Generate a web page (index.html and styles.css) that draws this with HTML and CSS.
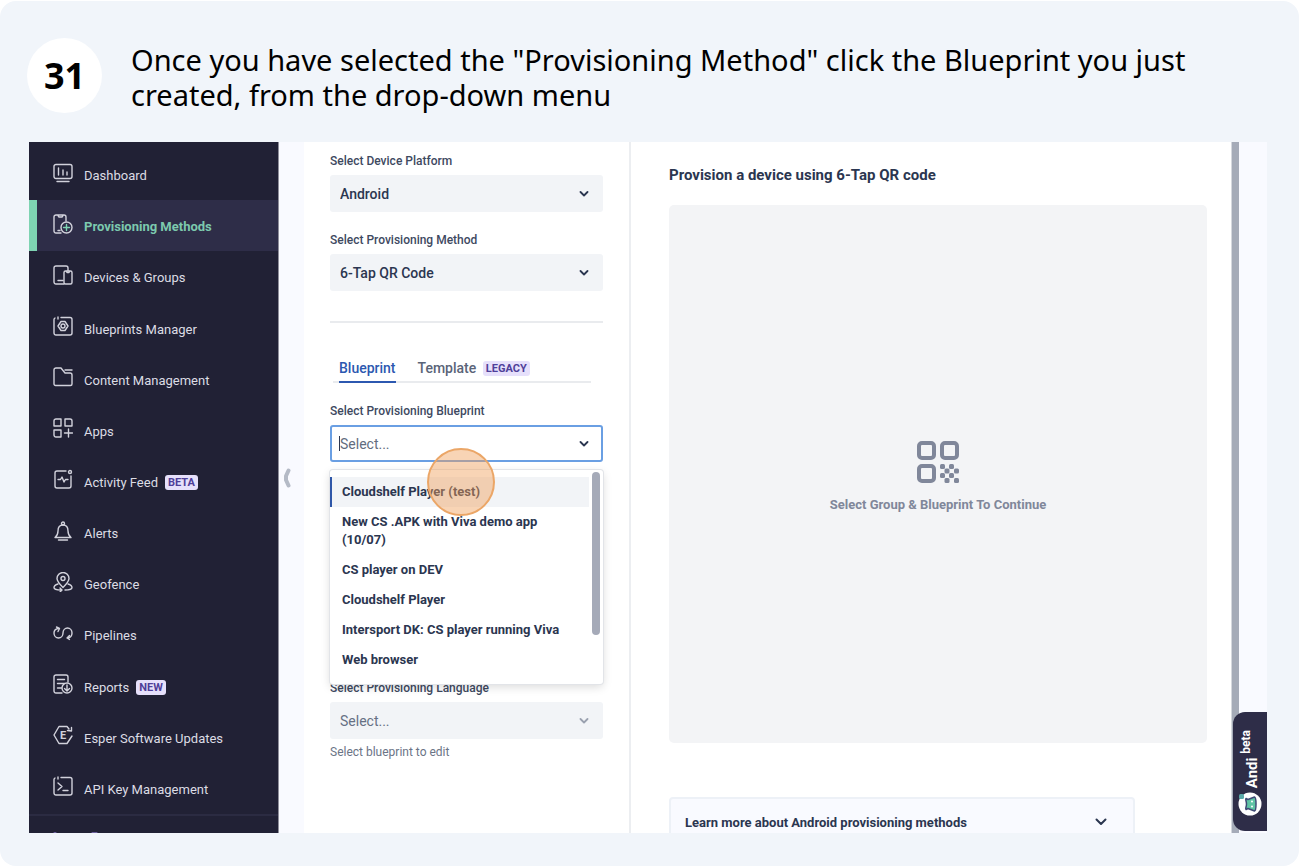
FILE: index.html
```html
<!DOCTYPE html>
<html lang="en">
<head>
  <meta charset="UTF-8">
  <meta name="viewport" content="width=device-width, initial-scale=1.0">
  <title>Step 31 - Select the Blueprint</title>
  <link rel="stylesheet" href="styles.css">
</head>
<body>

  <article class="step">
    <header class="step-header">
      <span class="step-number">31</span>
      <h1 class="step-title">Once you have selected the "Provisioning Method" click the Blueprint you just created, from the drop-down menu</h1>
    </header>

    <div class="app">

      <!-- Sidebar -->
      <aside class="sidebar">
        <nav class="nav">
          <a href="#" class="nav-item">
            <svg class="icon" viewBox="0 0 20 20"><rect x="1" y="1.500" width="18" height="14" rx="2"/><path d="M5.500 5v7M10 7v5M14 9v3M4 18.500h12"/></svg>
            Dashboard
          </a>
          <a href="#" class="nav-item active">
            <svg class="icon" viewBox="0 0 20 20"><path d="M8 19H3a2 2 0 0 1-2-2V3a2 2 0 0 1 2-2h8a2 2 0 0 1 2 2v4M5 1.500l1 1.500h3l1-1.500M5 16.500h2"/><circle cx="13.500" cy="13.500" r="5.500"/><path class="green" d="M13.500 10.500v6M10.500 13.500h6"/></svg>
            Provisioning Methods
          </a>
          <a href="#" class="nav-item">
            <svg class="icon" viewBox="0 0 20 20"><path d="M11 19H3a2 2 0 0 1-2-2V3a2 2 0 0 1 2-2h10a2 2 0 0 1 2 2v3M5 15.500h5"/><rect x="11" y="6" width="8" height="13" rx="1.500"/><path d="M13.500 6.500l.5 1h2l.5-1"/></svg>
            Devices &amp; Groups
          </a>
          <a href="#" class="nav-item">
            <svg class="icon" viewBox="0 0 20 20"><path d="M8 1.500h9a2 2 0 0 1 2 2V17a2 2 0 0 1-2 2H3a2 2 0 0 1-2-2V3.500a2 2 0 0 1 1-1.500M5 1v2"/><path d="M8 5.500h4l1 1.500 2 3-2 3-1 1.500H8L7 13l-2-3 2-3z"/><circle cx="10" cy="10" r="2"/></svg>
            Blueprints Manager
          </a>
          <a href="#" class="nav-item">
            <svg class="icon" viewBox="0 0 20 20"><path d="M12 3h7M1 3a2 2 0 0 1 2-2h5l4 5h5a2 2 0 0 1 2 2v9a1.500 1.500 0 0 1-1.500 1.500h-15A1.500 1.500 0 0 1 1 17z"/></svg>
            Content Management
          </a>
          <a href="#" class="nav-item">
            <svg class="icon" viewBox="0 0 20 20"><path d="M3 1h5v7H1V3a2 2 0 0 1 2-2zM12 1h5a2 2 0 0 1 2 2v5h-7zM1 12h7v7H3a2 2 0 0 1-2-2zM15.500 11v8M11.500 15h8"/></svg>
            Apps
          </a>
          <a href="#" class="nav-item">
            <svg class="icon" viewBox="0 0 20 20"><path d="M13 2H4a2 2 0 0 0-2 2v13a2 2 0 0 0 2 2h12a2 2 0 0 0 2-2V7M5 10.500h2.500L9 8l2 5 1.500-2.500H15"/><circle cx="17" cy="3" r="1.500"/></svg>
            Activity Feed <span class="badge">BETA</span>
          </a>
          <a href="#" class="nav-item">
            <svg class="icon" viewBox="0 0 20 20"><path d="M2 16.500c2-1.500 3-3 3-6.500 0-4 2-6 5-6s5 2 5 6c0 3.500 1 5 3 6.500zM5.500 19h9"/><circle cx="10" cy="2.500" r="1.500"/></svg>
            Alerts
          </a>
          <a href="#" class="nav-item">
            <svg class="icon" viewBox="0 0 20 20"><path d="M10 15.500C6 11.500 4 9 4 6.500a6 6 0 0 1 12 0c0 2.500-2 5-6 9z"/><circle cx="10" cy="6.500" r="2"/><path d="M5 12c-3 1-4 2-4 3.500 0 1.500 3 2.500 7 2.500M7 16l2 2-2 2M15 12c3 1 4 2 4 3.500 0 1.500-3 2.500-7 2.500"/></svg>
            Geofence
          </a>
          <a href="#" class="nav-item">
            <svg class="icon" viewBox="0 0 20 20"><path d="M5 5.500C2.500 6 1 8 1 10c0 3 2 5 4.500 5S10 13 10 10s2-5 4.500-5S19 7 19 10c0 2.500-1.500 4.500-4 5M3.500 4l3 1.500L5 8.500M16.500 12.500l-2.500 2.500 2.500 1.500"/></svg>
            Pipelines
          </a>
          <a href="#" class="nav-item">
            <svg class="icon" viewBox="0 0 20 20"><path d="M9 19H3a2 2 0 0 1-2-2V3a2 2 0 0 1 2-2h10a2 2 0 0 1 2 2v5M4.500 5.500h7M4.500 9.500h7M4.500 14h4"/><circle cx="14" cy="14" r="5"/><path d="M14 11v5.500M11.500 14.500l2.500 2.500 2.500-2.500"/></svg>
            Reports <span class="badge">NEW</span>
          </a>
          <a href="#" class="nav-item">
            <svg class="icon" viewBox="0 0 20 20"><path d="M16 4l-2-2.500H6L1 10l5 8.500h8l5-7.500M14.500 5.500l4 .5V2.500"/><text class="icon-letter" x="10" y="14">E</text></svg>
            Esper Software Updates
          </a>
          <a href="#" class="nav-item">
            <svg class="icon" viewBox="0 0 20 20"><path d="M8 1.500h9a2 2 0 0 1 2 2V17a2 2 0 0 1-2 2H3a2 2 0 0 1-2-2V3.500a2 2 0 0 1 1-1.500M5 1v2M5 7l4 3.500L5 14M10 14.500h5"/></svg>
            API Key Management
          </a>
        </nav>
        <div class="nav-more">
          <svg width="48" height="2" viewBox="0 0 48 2"><path d="M1 1.500h2M39 1.500h5"/></svg>
        </div>
      </aside>

      <div class="gutter">
        <button type="button" class="collapse" aria-label="Collapse sidebar">
          <svg width="8" height="20" viewBox="0 0 8 20"><path d="M5.500 2.500L3 8v4l2.500 5.500"/></svg>
        </button>
      </div>

      <!-- Provisioning form -->
      <form class="settings">
        <label class="label" for="platform">Select Device Platform</label>
        <div class="field">
          <select id="platform"><option>Android</option></select>
          <svg class="chevron" viewBox="0 0 10 6"><path d="M1.500 1L5 4.500 8.500 1"/></svg>
        </div>

        <label class="label" for="method">Select Provisioning Method</label>
        <div class="field">
          <select id="method"><option>6-Tap QR Code</option></select>
          <svg class="chevron" viewBox="0 0 10 6"><path d="M1.500 1L5 4.500 8.500 1"/></svg>
        </div>

        <hr class="divider">

        <div class="tabs">
          <button type="button" class="tab selected">Blueprint</button>
          <button type="button" class="tab">Template <span class="badge legacy">LEGACY</span></button>
        </div>

        <label class="label" for="blueprint">Select Provisioning Blueprint</label>
        <div class="field open">
          <input type="text" id="blueprint" placeholder="Select..." autocomplete="off">
          <span class="caret"></span>
          <svg class="chevron" viewBox="0 0 10 6"><path d="M1.500 1L5 4.500 8.500 1"/></svg>
          <div class="menu">
            <ul class="options">
              <li class="option focused">Cloudshelf Player (test)</li>
              <li class="option">New CS .APK with Viva demo app (10/07)</li>
              <li class="option">CS player on DEV</li>
              <li class="option">Cloudshelf Player</li>
              <li class="option">Intersport DK: CS player running Viva</li>
              <li class="option">Web browser</li>
            </ul>
            <div class="menu-thumb"></div>
          </div>
          <span class="click-spot"></span>
        </div>

        <label class="label language-label" for="language">Select Provisioning Language</label>
        <div class="field disabled">
          <select id="language" disabled><option>Select...</option></select>
          <svg class="chevron" viewBox="0 0 10 6"><path d="M1.500 1L5 4.500 8.500 1"/></svg>
        </div>
        <p class="hint">Select blueprint to edit</p>
      </form>

      <!-- QR preview -->
      <section class="preview">
        <h2 class="preview-title">Provision a device using 6-Tap QR code</h2>
        <div class="qr-box">
          <svg class="qr-icon" viewBox="0 0 42 42">
            <g class="qr-frames">
              <rect x="2" y="2" width="15" height="15" rx="3"/>
              <rect x="25" y="2" width="15" height="15" rx="3"/>
              <rect x="2" y="25" width="15" height="15" rx="3"/>
            </g>
            <g class="qr-dots">
              <rect x="23" y="23" width="5" height="5" rx="1.500"/>
              <rect x="32" y="23" width="5" height="5" rx="1.500"/>
              <rect x="27.500" y="27.500" width="5" height="5" rx="1.500"/>
              <rect x="37" y="27.500" width="5" height="5" rx="1.500"/>
              <rect x="23" y="32" width="5" height="5" rx="1.500"/>
              <rect x="32" y="32" width="5" height="5" rx="1.500"/>
              <rect x="27.500" y="37" width="5" height="5" rx="1.500"/>
              <rect x="37" y="37" width="5" height="5" rx="1.500"/>
            </g>
          </svg>
          <p class="qr-text">Select Group &amp; Blueprint To Continue</p>
        </div>
        <button type="button" class="learn-more">
          Learn more about Android provisioning methods
          <svg class="learn-chevron" viewBox="0 0 12 8"><path d="M1.500 1.500L6 6l4.500-4.500"/></svg>
        </button>
      </section>

      <div class="page-scroll"></div>

      <button type="button" class="andi">
        <svg class="andi-face" viewBox="0 0 24 24">
          <circle class="face" cx="12" cy="12" r="11.500"/>
          <path class="head" d="M10 7.500L16.500 5c2 .5 2 13.500 0 14L10 16.500l-2 1c-1-1 .5-2 .5-5.500S7 7.500 8 6.500z"/>
          <circle class="eye" cx="14" cy="9.500" r="1"/>
          <circle class="eye" cx="14" cy="14.500" r="1"/>
          <rect class="antenna" x="1" y="2" width="5" height="5" rx="1.500"/>
        </svg>
        <span class="andi-text">Andi <small>beta</small></span>
      </button>
    </div>
  </article>

</body>
</html>
```

FILE: styles.css
```css
* { box-sizing: border-box; }
body {
  margin: 0;
  background: white;
  font-family: Roboto, "Liberation Sans", sans-serif;
  font-size: 13px;
  color: #2b3650;
}
.step {
  margin: 1px 1px 0 0;
  min-height: 865px;
  padding: 37px 32px 32px 29px;
  background: #f1f5fa;
  border-radius: 16px;
}
.step-header {
  display: flex;
  align-items: center;
  gap: 29px;
  margin: 0 0 29px -2px;
  font-family: "Noto Sans", sans-serif;
  color: black;
}
.step-number {
  flex: none;
  width: 75px;
  height: 75px;
  line-height: 75px;
  border-radius: 50%;
  background: white;
  text-align: center;
  font-size: 36px;
  font-weight: bold;
}
.step-title { margin: 0; padding-top: 2px; font-size: 29px; font-weight: normal; line-height: 35px; }

/* App window */
.app {
  position: relative;
  display: flex;
  aspect-ratio: 1238 / 691;
  overflow: hidden;
  background: #f9faff;
}
button { border: 0; background: none; padding: 0; font: inherit; color: inherit; cursor: pointer; }
svg { fill: none; stroke: currentColor; stroke-linecap: round; stroke-linejoin: round; }

/* Sidebar */
.sidebar {
  flex: none;
  display: flex;
  flex-direction: column;
  width: 250px;
  padding-top: 7px;
  background: #212135;
  border-right: 1px solid #8e8e9a;
}
.nav { flex: 1; display: grid; grid-auto-rows: 1fr; }
.nav-item {
  display: flex;
  align-items: center;
  padding: 2px 0 0 24px;
  color: #dcdce4;
  text-decoration: none;
}
.nav-item.active {
  padding-left: 16px;
  border-left: 8px solid #7ed3b2;
  background: #2e2d48;
  color: #7cc9ae;
  font-weight: bold;
}
.icon {
  width: 20px;
  height: 20px;
  margin: 0 11px 6px 0;
  color: #d2d2dc;
  stroke-width: 1.4;
}
.icon .green { stroke: #7ed3b2; }
.icon-letter {
  font-size: 11px;
  font-weight: bold;
  text-anchor: middle;
  fill: currentColor;
  stroke: none;
}
.badge {
  margin-left: 7px;
  padding: 0 3px;
  border-radius: 3px;
  background: #e6e0fb;
  color: #4f3f99;
  font-size: 11px;
  font-weight: bold;
  line-height: 15px;
}
.nav-more {
  height: 19px;
  padding: 15px 0 0 24px;
  border-top: 2px solid #2b2b42;
  color: #6b5f9c;
}
.nav-more svg { display: block; }
.gutter { flex: none; width: 25px; padding-left: 4px; display: flex; align-items: center; }
.collapse { height: 20px; margin-bottom: 20px; color: #b4bac6; }
.collapse svg { display: block; stroke-width: 4; }

/* Form */
.settings {
  flex: none;
  width: 327px;
  padding: 10px 26px 0;
  background: white;
  border-right: 2px solid #eceef1;
}
.label {
  display: block;
  margin-bottom: 5px;
  color: #3e495f;
  font-size: 12px;
  font-weight: 500;
  line-height: 18px;
}
.field { position: relative; height: 37px; margin-bottom: 19px; color: #2b3650; }
.field select, .field input {
  display: block;
  appearance: none;
  width: 100%;
  height: 100%;
  margin: 0;
  padding: 0 10px;
  border: 0;
  border-radius: 3px;
  background: #f2f4f7;
  color: inherit;
  font: inherit;
  font-size: 14px;
  font-weight: 500;
  opacity: 1;
}
.field.open input { padding: 0 8px; border: 2px solid #6a9fe3; background: white; font-weight: normal; }
.field input::placeholder { color: #626c7e; }
.field.disabled { color: #667084; margin-bottom: 4px; }
.field.disabled select { font-weight: normal; }
.caret { position: absolute; left: 9px; top: 11px; width: 1px; height: 15px; background: #2b3650; }
.chevron { position: absolute; right: 14px; top: 16px; width: 10px; height: 6px; stroke-width: 1.8; }
.field.disabled .chevron { color: #9aa1af; }
.divider { margin: 30px 0 32px; border: 0; border-top: 2px solid #e9ebee; }
.tabs {
  display: flex;
  gap: 22px;
  height: 28px;
  margin: 0 12px 19px 3px;
  padding-left: 6px;
  border-bottom: 2px solid #e9ebee;
}
.tab { height: 28px; padding-bottom: 2px; color: #5a6478; font-size: 14px; font-weight: 500; }
.tab.selected { border-bottom: 2px solid #2c58b0; padding-bottom: 0; color: #2c58b0; }
.legacy { margin-left: 3px; display: inline-block; vertical-align: 1px; }

/* Blueprint drop-down */
.menu {
  position: absolute;
  z-index: 1;
  top: 45px;
  left: 0;
  right: 0;
  padding: 7px 14px 9px 0;
  background: white;
  border-radius: 3px;
  box-shadow: 0 0 0 1px #e2e4e8, 0 3px 10px rgba(0, 0, 0, 0.15);
}
.options { list-style: none; margin: 0; padding: 0; }
.option { padding: 6px 16px 6px 12px; line-height: 18px; font-weight: bold; }
.option.focused { padding-left: 10px; border-left: 2px solid #2f57a8; background: #f2f4f7; }
.menu-thumb {
  position: absolute;
  top: 2px;
  right: 3px;
  width: 8px;
  height: 163px;
  border-radius: 4px;
  background: #a5aab8;
}
.click-spot {
  position: absolute;
  z-index: 2;
  left: 97px;
  top: 23px;
  width: 68px;
  height: 68px;
  border: 2px solid #eba667;
  border-radius: 50%;
  background: rgba(240, 160, 90, 0.45);
}
.language-label { margin-top: 217px; }
.hint { margin: 0; font-size: 12px; line-height: 18px; color: #6b7486; }

/* Preview */
.preview { flex: 1; padding: 23px 24px 0 38px; background: white; }
.preview-title { margin: 0 0 20px; font-size: 15px; line-height: 20px; font-weight: bold; }
.qr-box {
  display: flex;
  flex-direction: column;
  align-items: center;
  justify-content: center;
  gap: 13px;
  padding-top: 6px;
  aspect-ratio: 1;
  border-radius: 5px;
  background: #f3f4f6;
  color: #80879a;
}
.qr-icon { width: 42px; height: 42px; stroke-width: 4; }
.qr-dots { fill: currentColor; stroke: none; }
.qr-text { margin: 0; line-height: 18px; font-weight: bold; }
.learn-more {
  display: flex;
  align-items: center;
  justify-content: space-between;
  width: 466px;
  height: 50px;
  margin-top: 54px;
  padding: 0 26px 0 14px;
  border: 2px solid #edf1f7;
  border-radius: 4px;
  background: #f9faff;
  font-weight: bold;
}
.learn-chevron { width: 12px; height: 8px; stroke-width: 2; }
.page-scroll {
  flex: none;
  width: 8px;
  margin-right: 28px;
  background: #a5abb8;
  border-left: 1px solid #d5d8de;
}

/* Assistant tab */
.andi {
  position: absolute;
  right: 0;
  bottom: 2px;
  display: flex;
  flex-direction: column-reverse;
  align-items: center;
  gap: 4px;
  width: 34px;
  height: 119px;
  padding: 15px 0;
  border-radius: 12px 0 0 12px;
  background: #2e2d48;
  color: white;
  font-size: 15px;
  font-weight: bold;
}
.andi-text { writing-mode: vertical-rl; transform: rotate(180deg); line-height: 18px; }
.andi-text small { font-size: 12px; vertical-align: super; line-height: 1; }
.andi-face { flex: none; width: 24px; height: 24px; stroke: none; }
.andi-face .face { fill: white; }
.andi-face .head { fill: #5fc3a4; stroke: #3f4a75; stroke-width: 1.5; }
.andi-face .eye { fill: white; }
.andi-face .antenna { fill: #5aa9a8; }
```
